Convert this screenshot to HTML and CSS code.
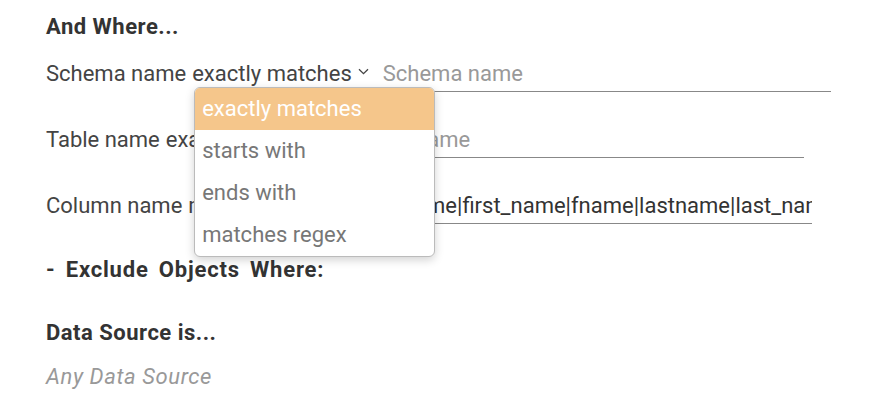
FILE: index.html
```html
<!DOCTYPE html>
<html>
<head>
<meta charset="utf-8">
<link rel="stylesheet" href="styles.css">
</head>
<body>
<div class="page">
  <h3 class="heading">And Where...</h3>
  <div class="rule">
    <span class="label">Schema name</span>
    <span class="select">exactly matches<svg class="chev" width="11" height="7" viewBox="0 0 11 7"><path d="M1 1.2 L5.5 5.6 L10 1.2" fill="none" stroke="#444" stroke-width="1.3"/></svg><ul class="menu">
        <li class="item active">exactly matches</li>
        <li class="item">starts with</li>
        <li class="item">ends with</li>
        <li class="item">matches regex</li>
      </ul></span>
    <input class="field" placeholder="Schema name">
  </div>
  <div class="rule">
    <span class="label">Table name</span>
    <span class="select">exactly matches<svg class="chev" width="11" height="7" viewBox="0 0 11 7"><path d="M1 1.2 L5.5 5.6 L10 1.2" fill="none" stroke="#444" stroke-width="1.3"/></svg></span>
    <input class="field" placeholder="Table name">
  </div>
  <div class="rule">
    <span class="label">Column name</span>
    <span class="select">matches regex<svg class="chev" width="11" height="7" viewBox="0 0 11 7"><path d="M1 1.2 L5.5 5.6 L10 1.2" fill="none" stroke="#444" stroke-width="1.3"/></svg></span>
    <input class="field" value="firstname|first_name|fname|lastname|last_name|lname">
  </div>
  <h3 class="heading exclude">- Exclude Objects Where:</h3>
  <h3 class="heading source">Data Source is...</h3>
  <div class="any">Any Data Source</div>
</div>
</body>
</html>
```
FILE: styles.css
```css
html, body { margin: 0; padding: 0; background: #fff; }
body { font-family: Roboto, "Liberation Sans", sans-serif; color: #333; }
.page { padding: 13px 0 0 46px; }
.heading { margin: 0; font-size: 22px; font-weight: 700; line-height: 28px; color: #333; letter-spacing: 0.5px; }
.rule { display: flex; align-items: baseline; font-size: 22px; line-height: 28px; margin-top: 19px; }
.rule + .rule { margin-top: 34px; }
.label { color: #444; margin-right: 6px; }
.select { position: relative; color: #444; display: inline-block; white-space: nowrap; }
.chev { margin-left: 6px; vertical-align: 6px; }
.field { width: 448px; margin-left: 14px; border: none; border-bottom: 1px solid #888; font: inherit; font-size: 22px; line-height: 28px; height: 28px; color: #333; padding: 0 0 3px 0; outline: none; background: transparent; }
.field::placeholder { color: #999; }
.menu { position: absolute; left: 2px; top: 27px; width: 239px; margin: 0; padding: 0; list-style: none; background: #fff; border: 1px solid #bbb; border-radius: 6px; box-shadow: 0 3px 10px rgba(0,0,0,0.18); overflow: hidden; z-index: 5; }
.item { height: 42px; line-height: 42px; padding-left: 7px; color: #777; font-size: 22px; }
.item.active { background: #f5c68b; color: #fff; }
.exclude { margin-top: 32px; letter-spacing: 0.8px; word-spacing: 4px; }
.source { margin-top: 35px; }
.any { font-style: italic; color: #999; font-size: 22px; line-height: 28px; margin-top: 16px; letter-spacing: 0.6px; }
```
